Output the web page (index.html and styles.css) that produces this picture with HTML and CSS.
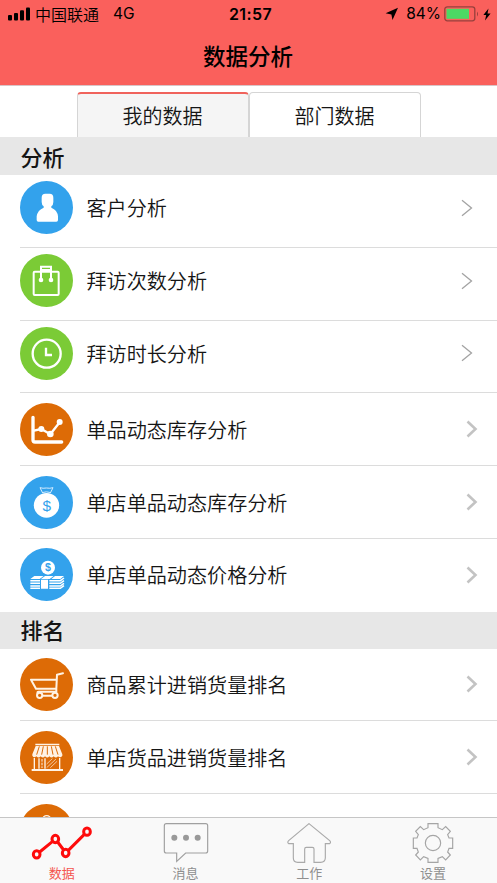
FILE: index.html
```html
<!DOCTYPE html>
<html lang="zh-CN">
<head>
<meta charset="utf-8">
<title>数据分析</title>
<link rel="stylesheet" href="styles.css">
</head>
<body>
<div class="app">
  <header class="header">
    <div class="status">
      <div class="status-left">
        <svg class="signal" width="23" height="14" viewBox="0 0 23 14"><rect x="0" y="8" width="4" height="5.5" rx="1"/><rect x="6" y="6" width="4" height="7.5" rx="1"/><rect x="12" y="3.3" width="4" height="10.2" rx="1"/><rect x="18" y="0.5" width="4" height="13" rx="1"/></svg>
        <span class="carrier">中国联通</span><span class="network">4G</span>
      </div>
      <span class="clock">21:57</span>
      <div class="status-right">
        <svg width="14" height="14" viewBox="0 0 14 14"><path d="M13 .8 7.5 13 6.4 7.5.6 6.2Z"/></svg>
        <span class="percent">84%</span>
        <svg width="36" height="16" viewBox="0 0 36 16"><rect x=".8" y=".8" width="30" height="14" rx="2.5" fill="none" stroke="#97403c" stroke-width="1.3"/><rect x="2.5" y="2.8" width="22.5" height="10" fill="#4cd964"/><path d="M33 5.5Q35 8 33 10.5Z" fill="#97403c"/></svg>
        <svg class="bolt" width="8" height="13" viewBox="0 0 8 13"><path d="M5.5.5.4 7h2.8L2 12.5 7.6 5.6H4.5Z"/></svg>
      </div>
    </div>
    <h1 class="title">数据分析</h1>
  </header>
  <nav class="tabs">
    <div class="tab tab-active">我的数据</div>
    <div class="tab">部门数据</div>
  </nav>
  <main class="list">
    <h2 class="section section-first">分析</h2>
    <div class="row row-high">
      <svg class="icon" viewBox="0 0 159 159"><circle cx="79.5" cy="79.5" r="79.5" fill="#33a2ec"/><path fill="#fff" d="M65 50Q65 38 76 38H89Q100 38 100 50V63Q100 72 94 76V80Q112 87 114 106V117Q114 122 109 122H55Q50 122 50 117V106Q53 87 71 80V76Q65 72 65 63Z"/></svg>
      <span class="label">客户分析</span>
      <svg class="chevron" viewBox="0 0 12 18"><path d="m1 1.2 9.5 7.8L1 16.8"/></svg>
    </div>
    <div class="row row-high">
      <svg class="icon" viewBox="0 0 159 159"><circle cx="79.5" cy="79.5" r="79.5" fill="#7bcb36"/><g fill="none" stroke="#fff" stroke-width="6"><rect x="41" y="53" width="75" height="70" rx="3"/><path d="M63 77V38H93V77M63 48H93"/></g><circle cx="63" cy="78" r="7" fill="#fff"/><circle cx="93" cy="78" r="7" fill="#fff"/></svg>
      <span class="label">拜访次数分析</span>
      <svg class="chevron" viewBox="0 0 12 18"><path d="m1 1.2 9.5 7.8L1 16.8"/></svg>
    </div>
    <div class="row row-high">
      <svg class="icon" viewBox="0 0 159 159"><circle cx="79.5" cy="79.5" r="79.5" fill="#7bcb36"/><g fill="none" stroke="#fff" stroke-width="7"><circle cx="80" cy="80" r="42"/><path d="M78 62V84H96"/></g></svg>
      <span class="label">拜访时长分析</span>
      <svg class="chevron" viewBox="0 0 12 18"><path d="m1 1.2 9.5 7.8L1 16.8"/></svg>
    </div>
    <div class="row">
      <svg class="icon" viewBox="0 0 159 159"><circle cx="79.5" cy="79.5" r="79.5" fill="#dd6b06"/><g fill="none" stroke="#fff" stroke-linecap="round" stroke-linejoin="round"><path stroke-width="10" d="M39 43V111Q39 117 45 117H125"/><path stroke-width="7" d="M42 83 64 78 91 94 119 58"/></g><g fill="#fff"><circle cx="64" cy="78" r="9"/><circle cx="91" cy="93" r="10"/><circle cx="119" cy="57" r="9"/></g></svg>
      <span class="label">单品动态库存分析</span>
      <svg class="chevron chevron-bold" viewBox="0 0 12 18"><path d="m1.5 1.5 8 7.5-8 7.5"/></svg>
    </div>
    <div class="row">
      <svg class="icon" viewBox="0 0 159 159"><circle cx="79.5" cy="79.5" r="79.5" fill="#33a2ec"/><ellipse cx="79.5" cy="88" rx="38" ry="37" fill="#fff"/><path d="M68 51 60 35Q69 38 79 36Q90 38 99 35L91 51M66 50Q79 45 93 50" fill="none" stroke="#d4ecff" stroke-width="3"/><text x="80" y="104" class="coin-large">$</text></svg>
      <span class="label">单店单品动态库存分析</span>
      <svg class="chevron chevron-bold" viewBox="0 0 12 18"><path d="m1.5 1.5 8 7.5-8 7.5"/></svg>
    </div>
    <div class="row row-last">
      <svg class="icon" viewBox="0 0 159 159"><circle cx="79.5" cy="79.5" r="79.5" fill="#33a2ec"/><circle cx="84" cy="59" r="21" fill="#fff"/><text x="84" y="70" class="coin-small">$</text><path fill="#fff" d="M43 84H71L59 93H31ZM75 84H101L89 93H63ZM105 84H132L121 93H94ZM63 95H84V122H63Z"/><path fill="none" stroke="#fff" stroke-width="4.5" d="M31 98H60M31 106H60M31 114H60M31 121H60M88 98H121L132 90M88 106H121L132 98M88 114H121L132 106M88 121H121L132 113"/></svg>
      <span class="label">单店单品动态价格分析</span>
      <svg class="chevron chevron-bold" viewBox="0 0 12 18"><path d="m1.5 1.5 8 7.5-8 7.5"/></svg>
    </div>
    <h2 class="section">排名</h2>
    <div class="row">
      <svg class="icon" viewBox="0 0 159 159"><circle cx="79.5" cy="79.5" r="79.5" fill="#dd6b06"/><g fill="none" stroke="#fff3e5" stroke-width="6" stroke-linecap="round" stroke-linejoin="round"><path d="M129 46 111 50 109 92H48L33 65H109M109 92V101H56Q51 101 53 106M68 113H96"/><circle cx="59" cy="112" r="8"/><circle cx="105" cy="112" r="8"/></g></svg>
      <span class="label">商品累计进销货量排名</span>
      <svg class="chevron chevron-bold" viewBox="0 0 12 18"><path d="m1.5 1.5 8 7.5-8 7.5"/></svg>
    </div>
    <div class="row">
      <svg class="icon" viewBox="0 0 159 159"><circle cx="79.5" cy="79.5" r="79.5" fill="#dd6b06"/><path fill="#fff3e5" d="M46 38H118V43H46ZM47 45H117L127 70V74Q121 83 114 76Q108 83 101 76Q95 83 88 76Q82 83 75 76Q69 83 62 76Q56 83 49 76Q42 83 37 74V70Z"/><g fill="none" stroke="#dd6b06" stroke-width="3"><path d="m58 46-8 25M70 46l-5 25M82 46v25M94 46l5 25M106 46l8 25"/></g><g fill="none" stroke="#fff3e5" stroke-width="4"><path d="M43 81V115M119 81V115M57 82V113M75 82V113"/><path stroke-width="6" d="M35 117H129"/><path stroke-width="3" stroke-dasharray="8 3" d="M66 84V111"/><path stroke-width="2" d="m80 99 17-16M80 110l28-26M91 110l20-19"/></g></svg>
      <span class="label">单店货品进销货量排名</span>
      <svg class="chevron chevron-bold" viewBox="0 0 12 18"><path d="m1.5 1.5 8 7.5-8 7.5"/></svg>
    </div>
    <div class="row">
      <svg class="icon" viewBox="0 0 159 159"><circle cx="79.5" cy="79.5" r="79.5" fill="#dd6b06"/><circle cx="80" cy="47" r="12" fill="none" stroke="#fff3e5" stroke-width="4"/></svg>
    </div>
  </main>
  <footer class="tabbar">
    <div class="item item-active">
      <svg width="66" height="40" viewBox="0 0 198 120"><g fill="none" stroke="#fe0b0b" stroke-width="9"><path d="M32 87 70 56M86 57 104 81M118 82 166 34"/><ellipse cx="23" cy="94" rx="10" ry="11"/><ellipse cx="79" cy="48" rx="10" ry="11"/><ellipse cx="110" cy="90" rx="10" ry="11"/><ellipse cx="174" cy="26" rx="10" ry="11"/></g></svg>
      <span>数据</span>
    </div>
    <div class="item">
      <svg width="48" height="40" viewBox="0 0 144 120"><path fill="none" stroke="#a0a0a0" stroke-width="3.5" d="M13 2H131Q137 2 137 8V84Q137 90 131 90H71L44 115V90H13Q7 90 7 84V8Q7 2 13 2Z"/><g fill="#999"><circle cx="37" cy="44" r="9"/><circle cx="72" cy="44" r="9"/><circle cx="107" cy="44" r="9"/></g></svg>
      <span>消息</span>
    </div>
    <div class="item">
      <svg width="48" height="40" viewBox="0 0 144 120"><path fill="none" stroke="#aaa" stroke-width="3.5" d="M72 2 134 53Q139 58 134 62H121V105Q120 118 107 118H87V78Q87 73 82 73H64Q59 73 59 78V118H38Q25 118 25 105V62H11Q6 58 11 53Z"/></svg>
      <span>工作</span>
    </div>
    <div class="item">
      <svg width="42" height="40" viewBox="0 0 126 120"><g fill="none" stroke="#a5a5a5" stroke-width="3.5"><path d="M48 2H78V14L91 20L101 11L115 25L107 35L111 45H122V76H111L107 87L115 96L101 111L91 101L78 106V118H48V106L35 101L25 111L11 96L19 87L15 76H4V45H15L19 35L11 25L25 11L35 20L48 14Z"/><circle cx="63" cy="60" r="23"/></g></svg>
      <span>设置</span>
    </div>
  </footer>
</div>
</body>
</html>
```
FILE: styles.css
```css
* { box-sizing: border-box; }
body {
  margin: 0;
  background: #fff;
  color: #151515;
  font-family: "Noto Sans CJK SC", sans-serif;
}
.app {
  width: 497px;
  height: 883px;
  display: flex;
  flex-direction: column;
  overflow: hidden;
}
.header {
  flex: none;
  height: 86px;
  background: #fa605c;
  border-bottom: 1px solid #d9c4c7;
  color: #000;
}
.status {
  display: grid;
  grid-template-columns: 1fr auto 1fr;
  align-items: center;
  height: 28px;
  padding: 0 6px 0 8px;
  font-size: 16px;
  line-height: 28px;
}
.status-left, .status-right { display: flex; align-items: center; }
.status-right { justify-content: flex-end; }
.carrier { margin-left: 4px; font-weight: 350; }
.network { margin-left: 14px; font-family: Inter, sans-serif; font-size: 15.5px; }
.clock { padding-left: 2px; font: 600 16px/28px Inter, sans-serif; letter-spacing: .4px; }
.percent { margin: 0 3px 0 7px; font-family: Inter, sans-serif; font-size: 15.5px; }
.bolt { margin-left: 3px; }
.title { margin: 0; padding-right: 1px; text-align: center; font-size: 22.5px; line-height: 55px; font-weight: 500; }
.tabs {
  flex: none;
  display: flex;
  justify-content: center;
  height: 50.5px;
  padding-top: 6px;
}
.tab {
  width: 172px;
  border: 1px solid #d5d5d5;
  border-bottom: 0;
  border-radius: 4px 4px 0 0;
  text-align: center;
  font-size: 20px;
  line-height: 45px;
  font-weight: 350;
}
.tab-active {
  background: #f5f5f5;
  border-top: 2px solid #f0635c;
  line-height: 43px;
}
.list { flex: 1; min-height: 0; overflow: hidden; }
.section {
  margin: 0;
  height: 36.8px;
  padding-left: 20.5px;
  background: #e7e7e7;
  font-size: 22px;
  line-height: 35px;
  font-weight: 500;
}
.section-first { height: 38.5px; line-height: 39px; }
.row {
  display: flex;
  align-items: center;
  height: 72.8px;
  margin-left: 20px;
  padding-right: 19px;
  border-bottom: 1px solid #dcdcdc;
}
.row-high { padding-right: 24px; padding-bottom: 6px; }
.row-last { border-bottom-color: transparent; }
.icon { flex: none; width: 53px; height: 53px; }
.label { flex: 1; margin-left: 13.5px; padding-top: 1px; font-size: 20.1px; line-height: 30px; font-weight: 350; }
.chevron { width: 12px; height: 18px; fill: none; stroke: #a3a3a3; stroke-width: 1.3; }
.chevron-bold { stroke: #c3c3c3; stroke-width: 2.6; }
.coin-large, .coin-small {
  font-family: "Liberation Sans", sans-serif;
  font-weight: 400;
  text-anchor: middle;
  fill: #33a2ec;
}
.coin-large { font-size: 46px; }
.coin-small { font-size: 32px; font-weight: 700; }
.tabbar {
  flex: none;
  display: grid;
  grid-template-columns: repeat(4, 1fr);
  height: 66px;
  padding: 5px 2px 0 0;
  background: #f9f9f9;
  border-top: 1px solid #c6c6c6;
}
.item {
  display: flex;
  flex-direction: column;
  align-items: center;
  color: #8f8f8f;
  font-size: 13px;
  line-height: 20px;
}
.item-active { color: #f4554f; }
```
